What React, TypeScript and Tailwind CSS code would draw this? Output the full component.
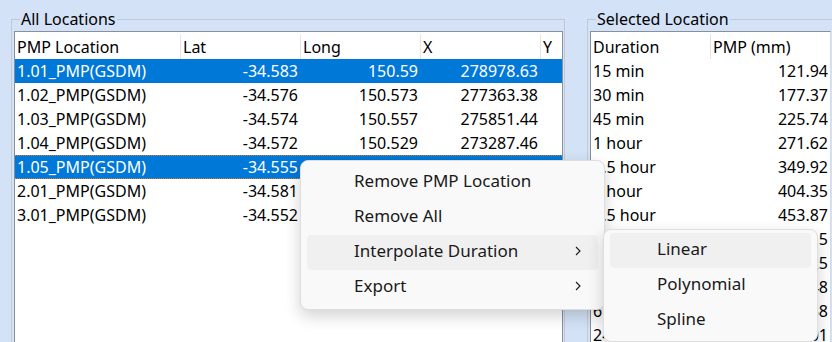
import React from 'react';

const locations = [
  { name: '1.01_PMP(GSDM)', lat: '-34.583', long: '150.59', x: '278978.63' },
  { name: '1.02_PMP(GSDM)', lat: '-34.576', long: '150.573', x: '277363.38' },
  { name: '1.03_PMP(GSDM)', lat: '-34.574', long: '150.557', x: '275851.44' },
  { name: '1.04_PMP(GSDM)', lat: '-34.572', long: '150.529', x: '273287.46' },
  { name: '1.05_PMP(GSDM)', lat: '-34.555', long: '150.541', x: '274371.02' },
  { name: '2.01_PMP(GSDM)', lat: '-34.581', long: '150.612', x: '280963.17' },
  { name: '3.01_PMP(GSDM)', lat: '-34.552', long: '150.634', x: '282921.55' },
];

const durations = [
  ['15 min', '121.94'],
  ['30 min', '177.37'],
  ['45 min', '225.74'],
  ['1 hour', '271.62'],
  ['1.5 hour', '349.92'],
  ['2 hour', '404.35'],
  ['2.5 hour', '453.87'],
  ['3 hour', '494.15'],
  ['4.5 hour', '561.25'],
  ['5 hour', '618.48'],
  ['6 hour', '668.38'],
  ['24 hour', '1029.01'],
];

const font = { fontFamily: '"Noto Sans", "Open Sans", sans-serif' };

const Chevron = () => (
  <svg width="8" height="12" viewBox="0 0 8 12" className="shrink-0">
    <path d="M2 2 L6 6 L2 10" fill="none" stroke="#1a1a1a" strokeWidth="1.1" />
  </svg>
);

const MenuItem = ({ label, active, sub }: { label: string; active?: boolean; sub?: boolean }) => (
  <div
    className={`flex items-center h-[35px] mx-[6px] pl-[47px] pr-[16px] pb-[3px] rounded-[4px] text-[17px] text-[#1a1a1a] ${
      active ? 'bg-[#f0f0f0]' : ''
    }`}
  >
    <span className="flex-1 whitespace-nowrap">{label}</span>
    {sub && <Chevron />}
  </div>
);

export default function App() {
  return (
    <div className="relative w-[832px] h-[342px] overflow-hidden bg-[#d3e2f6] flex pt-[9px]" style={font}>
      {/* All Locations */}
      <fieldset className="ml-[11px] w-[554px] min-w-0 h-[400px] shrink-0 border border-[#c3c9d1] pl-[2px] pr-[1px]">
        <legend className="ml-[6px] px-[1px] text-[16px] leading-[20px] text-black">All Locations</legend>
        <div className="mt-[2px] h-[360px] border border-[#8a9099] bg-white overflow-hidden text-[16px] text-black">
          <div className="flex h-[27px] items-center whitespace-nowrap pt-[2px]">
            <div className="w-[166px] shrink-0 h-full flex items-center pl-[2px] border-r border-[#e5e5e5]">PMP Location</div>
            <div className="w-[120px] shrink-0 h-full flex items-center pl-[2px] border-r border-[#e5e5e5]">Lat</div>
            <div className="w-[120px] shrink-0 h-full flex items-center pl-[2px] border-r border-[#e5e5e5]">Long</div>
            <div className="w-[120px] shrink-0 h-full flex items-center pl-[2px] border-r border-[#e5e5e5]">X</div>
            <div className="flex-1 h-full flex items-center pl-[2px]">Y</div>
          </div>
          {locations.map((r, i) => {
            const sel = i === 0 || i === 4;
            return (
              <div
                key={r.name}
                className={`flex h-[24px] items-center whitespace-nowrap ${
                  sel ? 'bg-[#0078d7] text-white' : ''
                } ${i === 4 ? 'border-y border-dotted border-[#e07a1f]' : ''}`}
              >
                <div className="w-[166px] shrink-0 pl-[2px]">{r.name}</div>
                <div className="w-[120px] shrink-0 text-right pr-[3px]">{r.lat}</div>
                <div className="w-[120px] shrink-0 text-right pr-[3px]">{r.long}</div>
                <div className="w-[120px] shrink-0 text-right pr-[3px]">{r.x}</div>
                <div className="flex-1" />
              </div>
            );
          })}
        </div>
      </fieldset>

      {/* Selected Location */}
      <fieldset className="ml-[22px] w-[250px] min-w-0 h-[400px] shrink-0 border border-[#c3c9d1] pl-[2px]">
        <legend className="ml-[6px] px-[1px] text-[16px] leading-[20px] text-black">Selected Location</legend>
        <div className="mt-[2px] w-[241px] h-[360px] border border-[#8a9099] border-r-[#d9dde3] bg-white overflow-hidden text-[16px] text-black">
          <div className="flex h-[27px] items-center whitespace-nowrap pt-[2px]">
            <div className="w-[120px] shrink-0 h-full flex items-center pl-[2px] border-r border-[#e5e5e5]">Duration</div>
            <div className="flex-1 h-full flex items-center pl-[2px]">PMP (mm)</div>
          </div>
          {durations.map(([d, v]) => (
            <div key={d} className="flex h-[24px] items-center whitespace-nowrap">
              <div className="w-[120px] shrink-0 pl-[2px]">{d}</div>
              <div className="flex-1 text-right pr-[2px]">{v}</div>
            </div>
          ))}
        </div>
      </fieldset>

      {/* Context menu */}
      <div className="absolute left-[300px] top-[160px] w-[305px] py-[4px] bg-[#f9f9f9] border border-[#dedede] rounded-[8px] shadow-[0_6px_16px_rgba(0,0,0,0.18)]">
        <MenuItem label="Remove PMP Location" />
        <MenuItem label="Remove All" />
        <MenuItem label="Interpolate Duration" active sub />
        <MenuItem label="Export" sub />
      </div>

      {/* Submenu */}
      <div className="absolute left-[603px] top-[229px] w-[215px] py-[3px] bg-[#f9f9f9] border border-[#dedede] rounded-[8px] shadow-[0_6px_16px_rgba(0,0,0,0.18)]">
        <MenuItem label="Linear" active />
        <MenuItem label="Polynomial" />
        <MenuItem label="Spline" />
      </div>
    </div>
  );
}
